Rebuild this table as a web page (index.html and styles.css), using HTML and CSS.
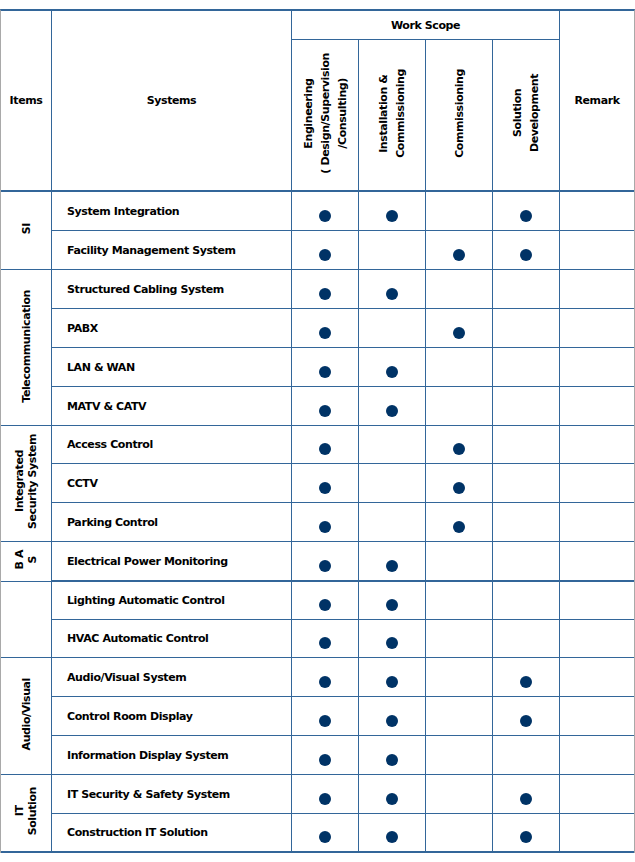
FILE: index.html
```html
<!DOCTYPE html>
<html>
<head>
<meta charset="utf-8">
<link rel="stylesheet" href="styles.css">
</head>
<body>
<table class="scope">
  <colgroup>
    <col class="c-items">
    <col class="c-sys">
    <col class="c-ws">
    <col class="c-ws">
    <col class="c-ws">
    <col class="c-ws">
    <col class="c-rem">
  </colgroup>
  <thead>
    <tr class="h1">
      <th rowspan="2" class="thick">Items</th>
      <th rowspan="2" class="thick">Systems</th>
      <th colspan="4">Work Scope</th>
      <th rowspan="2" class="thick last">Remark</th>
    </tr>
    <tr class="h2">
      <th class="thick"><div class="vt hd">Engineering<br>( Design/Supervision<br>/Consulting)</div></th>
      <th class="thick"><div class="vt hd">Installation &amp;<br>Commissioning</div></th>
      <th class="thick"><div class="vt hd">Commissioning</div></th>
      <th class="thick"><div class="vt hd">Solution<br>Development</div></th>
    </tr>
  </thead>
  <tbody>
    <tr class="r39">
      <td rowspan="2" class="grp"><div class="vt">SI</div></td>
      <td class="sys">System Integration</td>
      <td><span class="dot"></span></td><td><span class="dot"></span></td><td></td><td><span class="dot"></span></td><td class="last"></td>
    </tr>
    <tr class="r39">
      <td class="sys">Facility Management System</td>
      <td><span class="dot"></span></td><td></td><td><span class="dot"></span></td><td><span class="dot"></span></td><td class="last"></td>
    </tr>
    <tr class="r39">
      <td rowspan="4" class="grp"><div class="vt">Telecommunication</div></td>
      <td class="sys">Structured Cabling System</td>
      <td><span class="dot"></span></td><td><span class="dot"></span></td><td></td><td></td><td class="last"></td>
    </tr>
    <tr class="r39">
      <td class="sys">PABX</td>
      <td><span class="dot"></span></td><td></td><td><span class="dot"></span></td><td></td><td class="last"></td>
    </tr>
    <tr class="r39">
      <td class="sys">LAN &amp; WAN</td>
      <td><span class="dot"></span></td><td><span class="dot"></span></td><td></td><td></td><td class="last"></td>
    </tr>
    <tr class="r39">
      <td class="sys">MATV &amp; CATV</td>
      <td><span class="dot"></span></td><td><span class="dot"></span></td><td></td><td></td><td class="last"></td>
    </tr>
    <tr class="r38">
      <td rowspan="3" class="grp"><div class="vt">Integrated<br>Security System</div></td>
      <td class="sys">Access Control</td>
      <td><span class="dot"></span></td><td></td><td><span class="dot"></span></td><td></td><td class="last"></td>
    </tr>
    <tr class="r39">
      <td class="sys">CCTV</td>
      <td><span class="dot"></span></td><td></td><td><span class="dot"></span></td><td></td><td class="last"></td>
    </tr>
    <tr class="r39">
      <td class="sys">Parking Control</td>
      <td><span class="dot"></span></td><td></td><td><span class="dot"></span></td><td></td><td class="last"></td>
    </tr>
    <tr class="r40">
      <td class="grp"><div class="vt">B A<br>S</div></td>
      <td class="sys thick">Electrical Power Monitoring</td>
      <td class="thick"><span class="dot"></span></td><td class="thick"><span class="dot"></span></td><td class="thick"></td><td class="thick"></td><td class="thick last"></td>
    </tr>
    <tr class="r38">
      <td rowspan="2" class="grp"></td>
      <td class="sys">Lighting Automatic Control</td>
      <td><span class="dot"></span></td><td><span class="dot"></span></td><td></td><td></td><td class="last"></td>
    </tr>
    <tr class="r38">
      <td class="sys">HVAC Automatic Control</td>
      <td><span class="dot"></span></td><td><span class="dot"></span></td><td></td><td></td><td class="last"></td>
    </tr>
    <tr class="r39">
      <td rowspan="3" class="grp"><div class="vt">Audio/Visual</div></td>
      <td class="sys">Audio/Visual System</td>
      <td><span class="dot"></span></td><td><span class="dot"></span></td><td></td><td><span class="dot"></span></td><td class="last"></td>
    </tr>
    <tr class="r39">
      <td class="sys">Control Room Display</td>
      <td><span class="dot"></span></td><td><span class="dot"></span></td><td></td><td><span class="dot"></span></td><td class="last"></td>
    </tr>
    <tr class="r39">
      <td class="sys">Information Display System</td>
      <td><span class="dot"></span></td><td><span class="dot"></span></td><td></td><td></td><td class="last"></td>
    </tr>
    <tr class="r39">
      <td rowspan="2" class="grp thick"><div class="vt">IT<br>Solution</div></td>
      <td class="sys">IT Security &amp; Safety System</td>
      <td><span class="dot"></span></td><td><span class="dot"></span></td><td></td><td><span class="dot"></span></td><td class="last"></td>
    </tr>
    <tr class="r39">
      <td class="sys thick">Construction IT Solution</td>
      <td class="thick"><span class="dot"></span></td><td class="thick"><span class="dot"></span></td><td class="thick"></td><td class="thick"><span class="dot"></span></td><td class="thick last"></td>
    </tr>
  </tbody>
</table>
</body>
</html>
```

FILE: styles.css
```css
* {
  box-sizing: border-box;
}

html, body {
  margin: 0;
  padding: 0;
  background: #ffffff;
}

.scope {
  margin-top: 9px;
  width: 635px;
  table-layout: fixed;
  border-collapse: separate;
  border-spacing: 0;
  border-top: 2px solid #336699;
  border-left: 1px solid #a9a9a9;
  border-right: 1px solid #a9a9a9;
  font-family: "DejaVu Sans", Verdana, sans-serif;
  font-size: 11px;
  font-weight: bold;
  letter-spacing: -0.4px;
  color: #000000;
}

.c-items { width: 51px; }
.c-sys { width: 240px; }
.c-ws { width: 67px; }
.c-rem { width: 74px; }

.scope th,
.scope td {
  padding: 0;
  border-right: 1px solid #336699;
  border-bottom: 1px solid #336699;
  text-align: center;
  vertical-align: middle;
  font-weight: bold;
}

.scope .last {
  border-right: none;
}

.scope .thick {
  border-bottom-width: 2px;
}

.h1 { height: 29px; }
.h2 { height: 152px; }
.r38 { height: 38px; }
.r39 { height: 39px; }
.r40 { height: 40px; }

.scope td.sys {
  text-align: left;
  padding-left: 15px;
}

.vt {
  display: inline-block;
  writing-mode: vertical-rl;
  transform: rotate(180deg);
  text-align: center;
  line-height: 13px;
  white-space: nowrap;
}

.vt.hd {
  line-height: 17px;
}

.dot {
  display: block;
  width: 12px;
  height: 12px;
  margin: 9px auto 0;
  border-radius: 50%;
  background: #003366;
}
```
